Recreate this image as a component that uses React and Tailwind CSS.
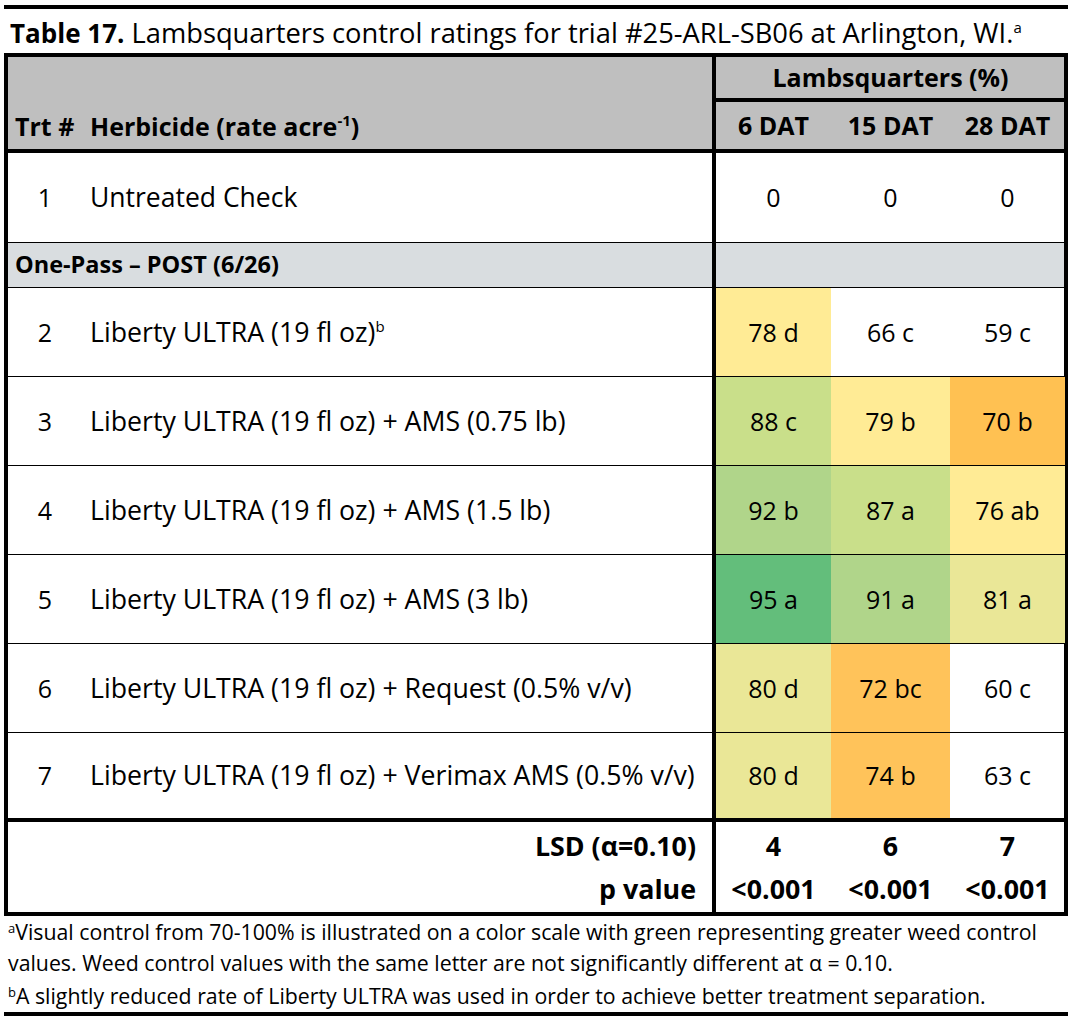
import React from 'react';

// Excel-style colour scale fills, picked off the printed table
const Y = 'bg-[#FFEB95]';
const LG = 'bg-[#C9DF8A]';
const MG = 'bg-[#B0D58A]';
const DG = 'bg-[#63BE7B]';
const OL = 'bg-[#EAE797]';
const OR = 'bg-[#FFC152]';
const OR2 = 'bg-[#FFC35A]';

const rows = [
  { n: 2, name: 'Liberty ULTRA (19 fl oz)', sup: 'b', v: [['78 d', Y], ['66 c', ''], ['59 c', '']] },
  { n: 3, name: 'Liberty ULTRA (19 fl oz) + AMS (0.75 lb)', v: [['88 c', LG], ['79 b', Y], ['70 b', OR]] },
  { n: 4, name: 'Liberty ULTRA (19 fl oz) + AMS (1.5 lb)', v: [['92 b', MG], ['87 a', LG], ['76 ab', Y]] },
  { n: 5, name: 'Liberty ULTRA (19 fl oz) + AMS (3 lb)', v: [['95 a', DG], ['91 a', MG], ['81 a', OL]] },
  { n: 6, name: 'Liberty ULTRA (19 fl oz) + Request (0.5% v/v)', v: [['80 d', OL], ['72 bc', OR2], ['60 c', '']] },
  { n: 7, name: 'Liberty ULTRA (19 fl oz) + Verimax AMS (0.5% v/v)', v: [['80 d', OL], ['74 b', OR2], ['63 c', '']], last: true },
];

const grid = 'grid grid-cols-[74px_634px_115px_119px_115px]';

function Sup({ children }) {
  return <sup className="text-[15px] -top-[10px]">{children}</sup>;
}

function DataRow({ r }) {
  return (
    <div className={`${grid} h-[89px] ${r.last ? 'border-b-4' : 'border-b'} border-black`}>
      <div className="flex items-center justify-center">{r.n}</div>
      <div className="flex items-center pl-2 border-r-4 border-black text-[26.7px] whitespace-nowrap">
        <span>
          {r.name}
          {r.sup && <Sup>{r.sup}</Sup>}
        </span>
      </div>
      {r.v.map(([t, bg], i) => (
        <div key={i} className={`flex items-center justify-center ${bg}`}>{t}</div>
      ))}
    </div>
  );
}

export default function App() {
  return (
    <div className="w-[1072px] h-[1017px] bg-white text-black font-['Open_Sans',sans-serif] text-[25px] leading-none pt-[5px]">
      <div className="mx-1 h-[4px] bg-black" />

      <div className="px-[10px] pt-[3px] h-[44px] flex items-center">
        <p className="text-[27.3px] whitespace-nowrap">
          <b className="text-[26px]">Table 17.</b> Lambsquarters control ratings for trial #25-ARL-SB06 at Arlington, WI.
          <Sup>a</Sup>
        </p>
      </div>

      <div className="mx-1 border-4 border-black">
        {/* header */}
        <div className="grid grid-cols-[708px_349px] h-[96px] bg-[#BFBFBF] border-b-4 border-black font-bold">
          <div className="border-r-4 border-black flex items-end pb-[10px]">
            <span className="w-[74px] pl-[7px]">Trt #</span>
            <span className="pl-2">
              Herbicide (rate acre<Sup>-1</Sup>)
            </span>
          </div>
          <div className="flex flex-col">
            <div className="h-[45px] flex items-center justify-center border-b-4 border-black">Lambsquarters (%)</div>
            <div className="flex-1 grid grid-cols-[115px_119px_115px]">
              <div className="flex items-center justify-center">6 DAT</div>
              <div className="flex items-center justify-center">15 DAT</div>
              <div className="flex items-center justify-center">28 DAT</div>
            </div>
          </div>
        </div>

        {/* untreated */}
        <div className={`${grid} h-[90px] border-b border-black`}>
          <div className="flex items-center justify-center">1</div>
          <div className="flex items-center pl-2 border-r-4 border-black text-[26.5px]">Untreated Check</div>
          <div className="flex items-center justify-center">0</div>
          <div className="flex items-center justify-center">0</div>
          <div className="flex items-center justify-center">0</div>
        </div>

        {/* section */}
        <div className="grid grid-cols-[708px_349px] h-[45px] border-b border-black bg-[#D9DDE0]">
          <div className="flex items-center pl-[7px] border-r-4 border-black font-bold text-[23.5px]">One-Pass – POST (6/26)</div>
          <div />
        </div>

        {rows.map((r) => <DataRow key={r.n} r={r} />)}

        {/* stats */}
        <div className="grid grid-cols-[708px_115px_119px_115px] h-[90px] font-bold text-[26.8px]">
          <div className="border-r-4 border-black flex flex-col items-end justify-center gap-[16px] pr-[16px] pt-[2px]">
            <span>LSD (α=0.10)</span>
            <span>p value</span>
          </div>
          {[['4', '<0.001'], ['6', '<0.001'], ['7', '<0.001']].map(([a, b], i) => (
            <div key={i} className="flex flex-col items-center justify-center gap-[16px] pt-[2px]">
              <span>{a}</span>
              <span>{b}</span>
            </div>
          ))}
        </div>
      </div>

      <div className="px-2 text-[21.3px] leading-[31px] whitespace-nowrap">
        <p>
          <sup className="text-[13px] -top-[7px]">a</sup>Visual control from 70-100% is illustrated on a color scale with green representing greater weed control
          <br />
          values. Weed control values with the same letter are not significantly different at α = 0.10.
        </p>
        <p className="mt-[2px]">
          <sup className="text-[13px] -top-[7px]">b</sup>A slightly reduced rate of Liberty ULTRA was used in order to achieve better treatment separation.
        </p>
      </div>
      <div className="mx-1 mt-[1px] h-[4px] bg-black" />
    </div>
  );
}
